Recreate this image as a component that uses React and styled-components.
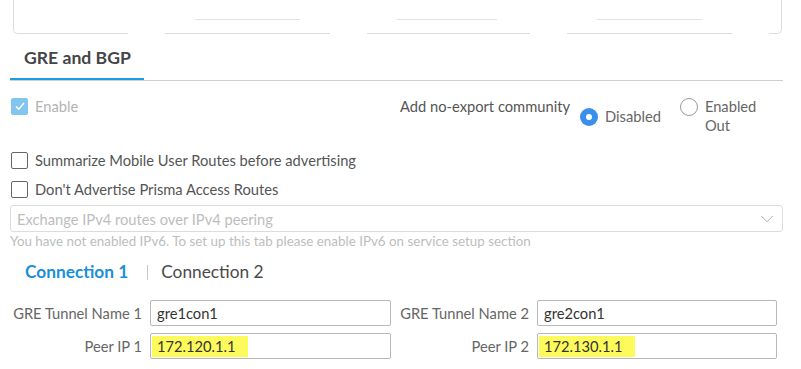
import React from 'react'
import styled, { createGlobalStyle } from 'styled-components'
import { ChevronDown } from 'lucide-react'

const GlobalStyle = createGlobalStyle`
    body {
        margin : 0;
        background : #fff;
        font-family : Lato, "Open Sans", sans-serif;
        color : #555;
    }
`

const topCells = [
    { width : 115, edge : 'left' },
    { width : 165, inner : 105 },
    { width : 163, inner : 100 },
    { width : 165, inner : 105 },
    { width : 13, edge : 'right' },
]

function App() {
    return (
        <Page>
            <GlobalStyle />
            <TopStrip>
                {topCells.map((c, i) => (
                    <TopCell key={i} style={{ width : c.width }} edge={c.edge}>
                        {c.inner && <InnerLine style={{ width : c.inner }} />}
                    </TopCell>
                ))}
            </TopStrip>

            <TabBar>
                <Tab>GRE and BGP</Tab>
            </TabBar>

            <OptionsRow>
                <CheckRow>
                    <Box checked>
                        <svg width="12" height="12" viewBox="0 0 12 12">
                            <path d="M2 6.5 L4.8 9.2 L10 3" fill="none" stroke="#fff" strokeWidth="1.5" />
                        </svg>
                    </Box>
                    <CheckText muted>Enable</CheckText>
                </CheckRow>
                <Community>
                    <CommunityLabel>Add no-export community</CommunityLabel>
                    <RadioOption shift={10}>
                        <Radio selected />
                        <RadioText>Disabled</RadioText>
                    </RadioOption>
                    <RadioOption>
                        <Radio />
                        <RadioText>Enabled<br />Out</RadioText>
                    </RadioOption>
                </Community>
            </OptionsRow>

            <CheckList>
                <CheckRow>
                    <Box />
                    <CheckText>Summarize Mobile User Routes before advertising</CheckText>
                </CheckRow>
                <CheckRow>
                    <Box />
                    <CheckText>Don't Advertise Prisma Access Routes</CheckText>
                </CheckRow>
            </CheckList>

            <Select>
                <span>Exchange IPv4 routes over IPv4 peering</span>
                <ChevronDown size={22} strokeWidth={1} color="#aaa" />
            </Select>
            <Help>You have not enabled IPv6. To set up this tab please enable IPv6 on service setup section</Help>

            <ConnTabs>
                <ConnTab active>Connection 1</ConnTab>
                <Divider />
                <ConnTab>Connection 2</ConnTab>
            </ConnTabs>

            <FieldGrid>
                <FieldLabel>GRE Tunnel Name 1</FieldLabel>
                <Input>gre1con1</Input>
                <FieldLabel>GRE Tunnel Name 2</FieldLabel>
                <Input>gre2con1</Input>

                <FieldLabel>Peer IP 1</FieldLabel>
                <Input marked><Mark>172.120.1.1</Mark></Input>
                <FieldLabel>Peer IP 2</FieldLabel>
                <Input marked><Mark>172.130.1.1</Mark></Input>
            </FieldGrid>
        </Page>
    )
}

const Page = styled.div`
    width : 773px;
    padding : 0 0 10px 10px;
`

const TopStrip = styled.div`
    display : flex;
    gap : 37px;
    height : 34px;
    margin-left : 3px;
`

const TopCell = styled.div`
    position : relative;
    box-sizing : border-box;
    height : 34px;
    border-bottom : 1px solid #dcdcdc;
    border-left : ${props => props.edge === 'left' ? '1px solid #dcdcdc' : 'none'};
    border-right : ${props => props.edge === 'right' ? '1px solid #dcdcdc' : 'none'};
    border-radius : ${props => props.edge === 'left' ? '0 0 0 5px' : props.edge === 'right' ? '0 0 5px 0' : '0'};
`

const InnerLine = styled.div`
    position : absolute;
    left : 30px;
    top : 19px;
    height : 1px;
    background : #e2e2e2;
`

const TabBar = styled.div`
    display : flex;
    border-bottom : 1px solid #cfcfcf;
`

const Tab = styled.div`
    box-sizing : border-box;
    width : 134px;
    height : 46px;
    padding-left : 14px;
    display : flex;
    align-items : center;
    font-size : 17.6px;
    font-weight : 700;
    color : #454545;
    box-shadow : inset 0 -2px 0 #1d9ce3;
`

const OptionsRow = styled.div`
    display : grid;
    grid-template-columns : 390px 1fr;
    margin-top : 16px;
    height : 47px;
`

const CheckRow = styled.div`
    display : flex;
    align-items : center;
    gap : 7px;
    height : 18px;
    padding-left : 1px;
`

const Box = styled.div`
    box-sizing : border-box;
    width : 17px;
    height : 17px;
    border-radius : 2px;
    display : flex;
    align-items : center;
    justify-content : center;
    background : ${props => props.checked ? '#82c6ef' : '#fff'};
    border : ${props => props.checked ? 'none' : '1.5px solid #666'};
`

const CheckText = styled.span`
    font-size : 14.7px;
    color : ${props => props.muted ? '#b3b3b3' : '#555'};
`

const Community = styled.div`
    display : flex;
    align-items : flex-start;
`

const CommunityLabel = styled.span`
    font-size : 14.7px;
    color : #555;
    margin-right : 10px;
    line-height : 18px;
`

const RadioOption = styled.div`
    display : flex;
    align-items : flex-start;
    gap : 7px;
    margin-top : ${props => props.shift || 0}px;
    margin-right : 19px;
`

const Radio = styled.div`
    box-sizing : border-box;
    width : 18px;
    height : 18px;
    margin-top : 1px;
    border-radius : 50%;
    background : ${props => props.selected ? '#3a8fe8' : '#fff'};
    border : ${props => props.selected ? 'none' : '1px solid #999'};
    display : flex;
    align-items : center;
    justify-content : center;

    &::after {
        content : '';
        display : ${props => props.selected ? 'block' : 'none'};
        width : 6px;
        height : 6px;
        border-radius : 50%;
        background : #fff;
    }
`

const RadioText = styled.span`
    font-size : 14.7px;
    line-height : 19px;
    color : #666;
`

const CheckList = styled.div`
    display : flex;
    flex-direction : column;
    gap : 11px;
    margin-top : 7px;
`

const Select = styled.div`
    box-sizing : border-box;
    margin-top : 7px;
    height : 27px;
    border : 1px solid #dcdcdc;
    border-radius : 3px;
    display : flex;
    align-items : center;
    justify-content : space-between;
    padding : 0 4px 0 6px;
    font-size : 14.7px;
    color : #bdbdbd;
`

const Help = styled.div`
    font-size : 13.4px;
    color : #bdbdbd;
    margin-top : 1px;
    line-height : 17px;
`

const ConnTabs = styled.div`
    display : flex;
    align-items : center;
    padding-left : 15px;
    margin-top : 7px;
    height : 28px;
`

const ConnTab = styled.span`
    font-size : 17.3px;
    font-weight : ${props => props.active ? 700 : 400};
    color : ${props => props.active ? '#1a8fd8' : '#4a4a4a'};
`

const Divider = styled.span`
    width : 1px;
    height : 15px;
    margin : 3px 13px 0 19px;
    background : #c8c8c8;
`

const FieldGrid = styled.div`
    display : grid;
    grid-template-columns : 132px 241px 130px 240px;
    column-gap : 8px;
    row-gap : 7px;
    margin-top : 15px;
`

const FieldLabel = styled.div`
    display : flex;
    align-items : center;
    justify-content : flex-end;
    font-size : 14.7px;
    color : #666;
`

const Input = styled.div`
    box-sizing : border-box;
    height : 26px;
    border : 1px solid #b8b8b8;
    border-radius : 2px;
    display : flex;
    align-items : center;
    padding-left : ${props => props.marked ? '1px' : '6px'};
    font-size : 14.7px;
    color : #333;
`

const Mark = styled.span`
    background : #fdfa5c;
    height : 21px;
    display : flex;
    align-items : center;
    padding : 0 12px 0 5px;
`

export default App
